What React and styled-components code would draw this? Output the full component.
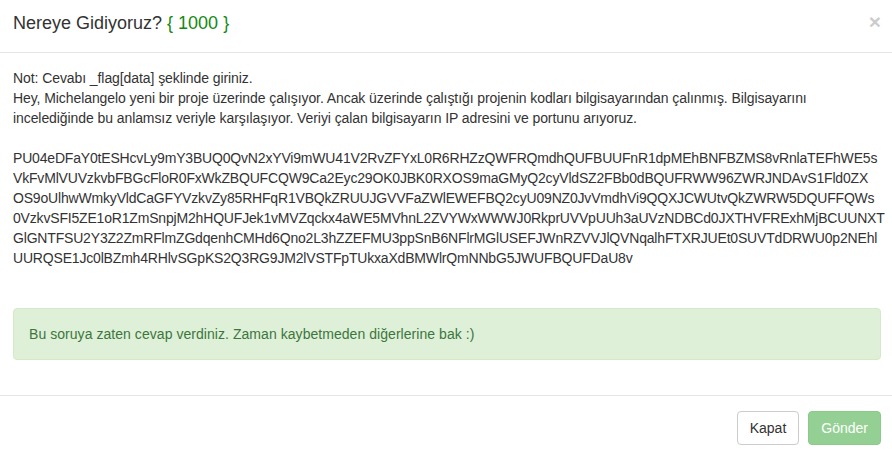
import React from 'react'
import styled, { createGlobalStyle } from 'styled-components'

const CODE_LINES = [
  'PU04eDFaY0tESHcvLy9mY3BUQ0QvN2xYVi9mWU41V2RvZFYxL0R6RHZzQWFRQmdhQUFBUUFnR1dpMEhBNFBZMS8vRnlaTEFhWE5s',
  'VkFvMlVUVzkvbFBGcFloR0FxWkZBQUFCQW9Ca2Eyc29OK0JBK0RXOS9maGMyQ2cyVldSZ2FBb0dBQUFRWW96ZWRJNDAvS1Fld0ZX',
  'OS9oUlhwWmkyVldCaGFYVzkvZy85RHFqR1VBQkZRUUJGVVFaZWlEWEFBQ2cyU09NZ0JvVmdhVi9QQXJCWUtvQkZWRW5DQUFFQWs',
  '0VzkvSFI5ZE1oR1ZmSnpjM2hHQUFJek1vMVZqckx4aWE5MVhnL2ZVYWxWWWJ0RkprUVVpUUh3aUVzNDBCd0JXTHVFRExhMjBCUUNXT',
  'GlGNTFSU2Y3Z2ZmRFlmZGdqenhCMHd6Qno2L3hZZEFMU3ppSnB6NFlrMGlUSEFJWnRZVVJlQVNqalhFTXRJUEt0SUVTdDRWU0p2NEhl',
  'UURQSE1Jc0lBZmh4RHlvSGpKS2Q3RG9JM2lVSTFpTUkxaXdBMWlrQmNNbG5JWUFBQUFDaU8v',
]

const GlobalStyle = createGlobalStyle`
  html, body {
    margin: 0;
    padding: 0;
    background: #fff;
  }
  body {
    font-family: "Liberation Sans", Arial, sans-serif;
    font-size: 14px;
    line-height: 20px;
    color: #333;
  }
`

export default function App() {
  return (
    <>
      <GlobalStyle />
      <Modal>
        <Header>
          <Title>
            Nereye Gidiyoruz? <Points>{'{ 1000 }'}</Points>
          </Title>
          <Close type="button" aria-label="Close">×</Close>
        </Header>
        <Body>
          <Paragraph>
            Not: Cevabı _flag[data] şeklinde giriniz.
            <br />
            Hey, Michelangelo yeni bir proje üzerinde çalışıyor. Ancak üzerinde çalıştığı projenin kodları bilgisayarından çalınmış. Bilgisayarını
            <br />
            incelediğinde bu anlamsız veriyle karşılaşıyor. Veriyi çalan bilgisayarın IP adresini ve portunu arıyoruz.
          </Paragraph>
          <Code>
            {CODE_LINES.map((line) => (
              <CodeLine key={line}>{line}</CodeLine>
            ))}
          </Code>
          <Alert>Bu soruya zaten cevap verdiniz. Zaman kaybetmeden diğerlerine bak :)</Alert>
        </Body>
        <Footer>
          <Button type="button">Kapat</Button>
          <Button type="button" $variant="success" disabled>Gönder</Button>
        </Footer>
      </Modal>
    </>
  )
}

const Modal = styled.div`
  width: 892px;
  height: 457px;
  background: #fff;
  display: flex;
  flex-direction: column;
  overflow: hidden;
`

const Header = styled.div`
  display: flex;
  align-items: flex-start;
  justify-content: space-between;
  padding: 11px 11px 15px 13px;
  border-bottom: 1px solid #e5e5e5;
`

const Title = styled.h4`
  margin: 0;
  font-size: 18px;
  font-weight: 500;
  line-height: 25.7px;
  color: #333;
`

const Points = styled.span`
  color: #138a13;
`

const Close = styled.button`
  border: 0;
  background: transparent;
  padding: 0;
  margin: 0 0 0 0;
  font-family: "Liberation Sans", Arial, sans-serif;
  font-size: 21px;
  font-weight: 700;
  line-height: 1;
  color: #000;
  opacity: 0.2;
  cursor: pointer;
`

const Body = styled.div`
  padding: 15px 11px 15px 13px;
  display: flex;
  flex-direction: column;
`

const Paragraph = styled.div`
  white-space: nowrap;
  letter-spacing: -0.08px;
`

const Code = styled.div`
  margin-top: 20px;
  display: flex;
  flex-direction: column;
`

const CodeLine = styled.div`
  white-space: nowrap;
  letter-spacing: -0.18px;
`

const Alert = styled.div`
  margin-top: 40px;
  margin-bottom: 20px;
  padding: 15px;
  border: 1px solid #d6e9c6;
  border-radius: 4px;
  background: #dff0d8;
  color: #3c763d;
  letter-spacing: 0.05px;
`

const Footer = styled.div`
  display: flex;
  justify-content: flex-end;
  gap: 9px;
  padding: 15px 11px 15px 13px;
  border-top: 1px solid #e5e5e5;
`

const Button = styled.button`
  height: 34px;
  padding: 6px 12px;
  font-family: "Liberation Sans", Arial, sans-serif;
  font-size: 14px;
  line-height: 20px;
  border-radius: 4px;
  border: 1px solid ${(p) => (p.$variant === 'success' ? '#4cae4c' : '#ccc')};
  background: ${(p) => (p.$variant === 'success' ? '#5cb85c' : '#fff')};
  color: ${(p) => (p.$variant === 'success' ? '#fff' : '#333')};
  opacity: ${(p) => (p.disabled ? 0.65 : 1)};
  cursor: ${(p) => (p.disabled ? 'not-allowed' : 'pointer')};
`
